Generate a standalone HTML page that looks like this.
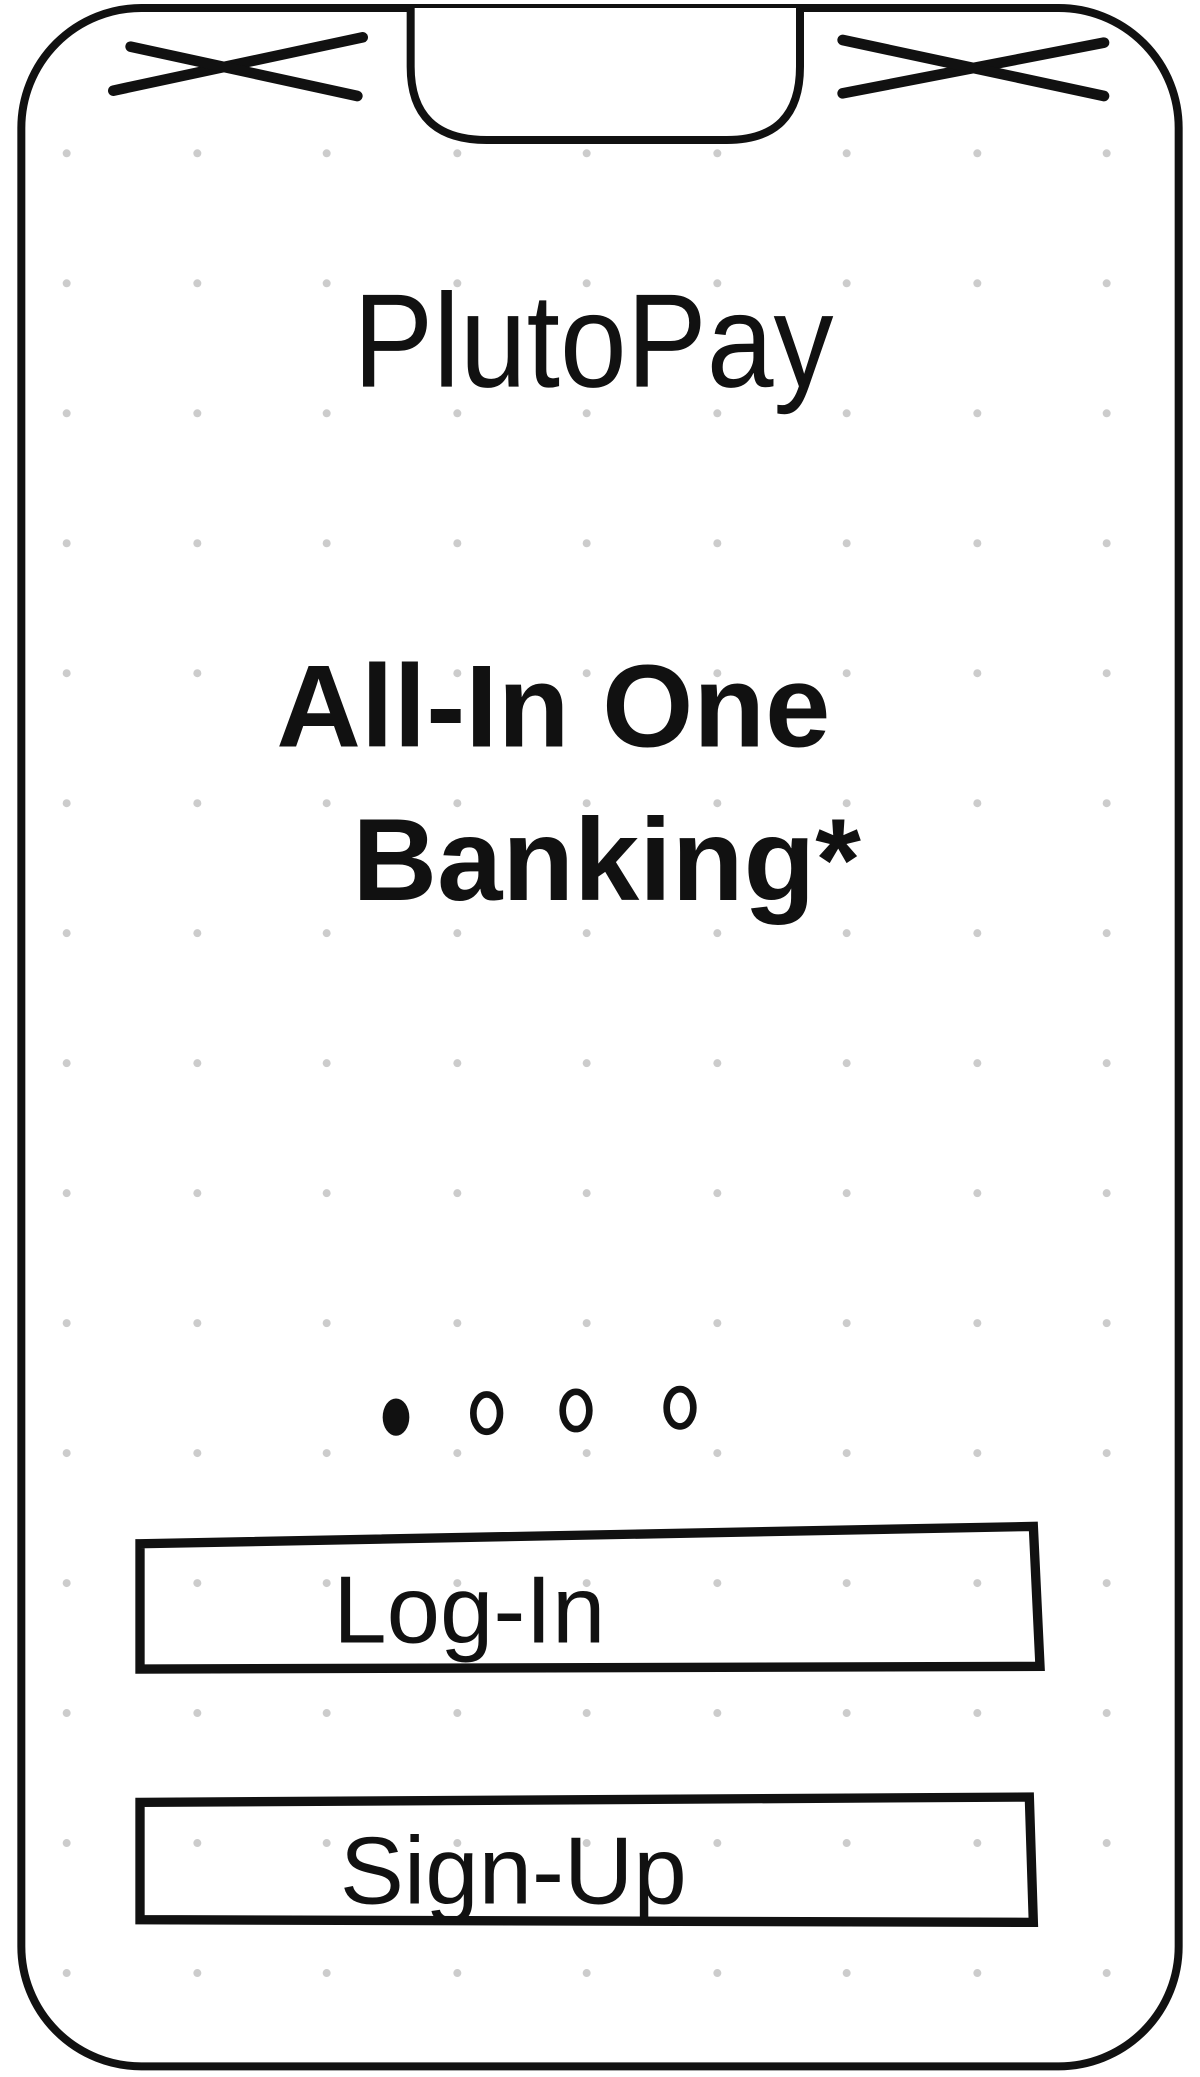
<!DOCTYPE html>
<html><head><meta charset="utf-8"><style>
html,body{margin:0;padding:0;background:#fff;}
svg{display:block}
text{font-family:"Liberation Sans",sans-serif;fill:#111;}
</style></head><body>
<svg width="1200" height="2077" viewBox="0 0 900 1558" preserveAspectRatio="none" xmlns="http://www.w3.org/2000/svg">
<rect width="900" height="1558" fill="#fff"/>
<defs>
<g id="row">
<circle cx="50" cy="115" r="3"/><circle cx="148" cy="115" r="3"/><circle cx="245" cy="115" r="3"/><circle cx="343" cy="115" r="3"/><circle cx="440" cy="115" r="3"/><circle cx="538" cy="115" r="3"/><circle cx="635" cy="115" r="3"/><circle cx="733" cy="115" r="3"/><circle cx="830" cy="115" r="3"/>
</g>
</defs>
<g fill="#cccccc">
<use href="#row" y="0"/><use href="#row" y="97.5"/><use href="#row" y="195"/><use href="#row" y="292.5"/><use href="#row" y="390"/><use href="#row" y="487.5"/><use href="#row" y="585"/><use href="#row" y="682.5"/><use href="#row" y="780"/><use href="#row" y="877.5"/><use href="#row" y="975"/><use href="#row" y="1072.5"/><use href="#row" y="1170"/><use href="#row" y="1267.5"/><use href="#row" y="1365"/>
</g>
<rect x="16" y="6" width="868" height="1544" rx="90" ry="90" fill="none" stroke="#111" stroke-width="6"/>
<path d="M308 6 L308 50 Q308 105 365 105 L545 105 Q600 105 600 50 L600 6" fill="#fff" stroke="#111" stroke-width="6"/>
<g stroke="#111" stroke-width="8" stroke-linecap="round">
<line x1="85" y1="68" x2="272" y2="28"/><line x1="98" y1="35" x2="268" y2="72"/>
<line x1="632" y1="70" x2="828" y2="32"/><line x1="632" y1="30" x2="828" y2="72"/>
</g>
<text x="445" y="290" font-size="100" text-anchor="middle" transform="translate(445 0) scale(0.9 1) translate(-445 0)">PlutoPay</text>
<text x="415" y="560" font-size="88" font-weight="bold" text-anchor="middle">All-In One</text>
<text x="455" y="675" font-size="88" font-weight="bold" text-anchor="middle">Banking*</text>
<ellipse cx="297" cy="1063" rx="10" ry="14" fill="#111"/>
<ellipse cx="365" cy="1060" rx="10" ry="14" fill="none" stroke="#111" stroke-width="5"/>
<ellipse cx="432" cy="1058" rx="10" ry="14" fill="none" stroke="#111" stroke-width="5"/>
<ellipse cx="510" cy="1056" rx="10" ry="14" fill="none" stroke="#111" stroke-width="5"/>
<path d="M105 1158 L775 1145 L780 1250 L105 1252 Z" fill="none" stroke="#111" stroke-width="7"/>
<text x="352" y="1232" font-size="72" text-anchor="middle">Log-In</text>
<path d="M105 1352 L772 1348 L775 1442 L105 1440 Z" fill="none" stroke="#111" stroke-width="7"/>
<text x="385" y="1428" font-size="72" text-anchor="middle">Sign-Up</text>
</svg>
</body></html>
